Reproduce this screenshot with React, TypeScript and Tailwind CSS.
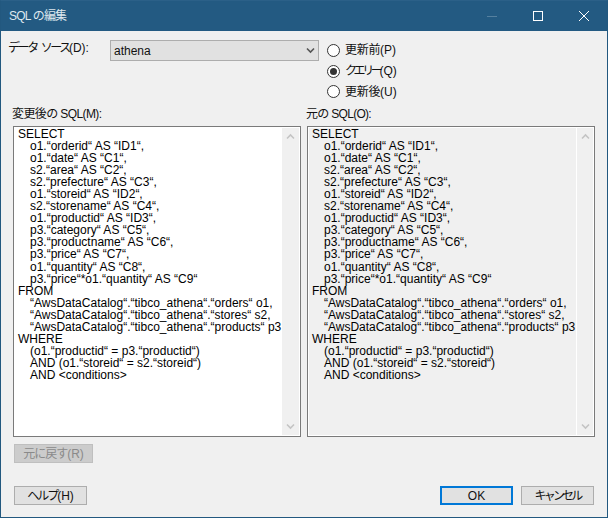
import React from "react";

const FONT = "font-['Liberation_Sans','Noto_Sans_CJK_JP',sans-serif]";

const SQL_LINES: [string, boolean][] = [
  ["SELECT", false],
  ["o1.“orderid“ AS “ID1“,", true],
  ["o1.“date“ AS “C1“,", true],
  ["s2.“area“ AS “C2“,", true],
  ["s2.“prefecture“ AS “C3“,", true],
  ["o1.“storeid“ AS “ID2“,", true],
  ["s2.“storename“ AS “C4“,", true],
  ["o1.“productid“ AS “ID3“,", true],
  ["p3.“category“ AS “C5“,", true],
  ["p3.“productname“ AS “C6“,", true],
  ["p3.“price“ AS “C7“,", true],
  ["o1.“quantity“ AS “C8“,", true],
  ["p3.“price“*o1.“quantity“ AS “C9“", true],
  ["FROM", false],
  ["“AwsDataCatalog“.“tibco_athena“.“orders“ o1,", true],
  ["“AwsDataCatalog“.“tibco_athena“.“stores“ s2,", true],
  ["“AwsDataCatalog“.“tibco_athena“.“products“ p3", true],
  ["WHERE", false],
  ["(o1.“productid“ = p3.“productid“)", true],
  ["AND (o1.“storeid“ = s2.“storeid“)", true],
  ["AND <conditions>", true],
];

function Chevron({ up, color = "#c4c4c4" }: { up?: boolean; color?: string }) {
  return (
    <svg width="9" height="7" viewBox="0 0 9 7" className="block">
      <path d={up ? "M1 5.5 L4.5 2 L8 5.5" : "M1 1.5 L4.5 5 L8 1.5"} fill="none" stroke={color} strokeWidth="1.6" />
    </svg>
  );
}

function SqlPanel({ label, grey, labelCls }: { label: string; grey?: boolean; labelCls: string }) {
  return (
    <div className="flex flex-col w-[288px]">
      <div className={`h-[19px] -ml-[1px] text-[12px] leading-[15px] text-[#111] ${labelCls}`}>{label}</div>
      <div className="h-[311px] border border-[#7a7a7a]">
        <div className={`h-full flex border border-white ${grey ? "bg-[#f0f0f0]" : "bg-white"}`}>
          <div className="flex-1 pl-[3px] text-[12px] leading-[12.05px] text-black whitespace-pre overflow-hidden">
            {SQL_LINES.map(([text, indent], i) => (
              <div key={i} className={indent ? "pl-[12px]" : ""}>{text}</div>
            ))}
          </div>
          <div className={`w-[17px] flex flex-col justify-between items-center py-[5px] bg-[#f0f0f0] ${grey ? "border-l border-white" : ""}`}>
            <Chevron up />
            <Chevron />
          </div>
        </div>
      </div>
    </div>
  );
}

function Radio({ children, checked }: { children: React.ReactNode; checked?: boolean }) {
  return (
    <div className="h-[21px] flex items-center gap-[5px]">
      <span className="w-[13px] h-[13px] rounded-full border border-[#333] bg-white flex items-center justify-center">
        {checked && <span className="w-[7px] h-[7px] rounded-full bg-[#333]" />}
      </span>
      <span className="text-[12px] text-[#111] whitespace-nowrap">{children}</span>
    </div>
  );
}

function Button({ children, primary, cls }: { children: React.ReactNode; primary?: boolean; cls?: string }) {
  return (
    <div className={`w-[73px] h-[19px] flex items-center justify-center bg-[#e1e1e1] text-[12px] text-[#111] whitespace-nowrap ${primary ? "border-2 border-[#0078d7]" : "border border-[#adadad]"} ${cls ?? ""}`}>
      {children}
    </div>
  );
}

export default function App() {
  return (
    <div className={`${FONT} w-[608px] h-[518px] flex flex-col bg-[#f0f0f0] border border-[#22587f] border-t-[#2b6088] overflow-hidden`}>
      <div className="h-[30px] shrink-0 flex items-center bg-[#235a82] text-white">
        <span className="ml-[8px] text-[12px] tracking-[-0.8px] text-[#dfe8ee]">SQL の編集</span>
        <div className="ml-auto flex items-center">
          <div className="w-[46px] flex justify-center">
            <svg width="10" height="10" viewBox="0 0 10 10"><path d="M0 5.5 H10" stroke="#55809f" strokeWidth="1" /></svg>
          </div>
          <div className="w-[46px] flex justify-center">
            <svg width="10" height="10" viewBox="0 0 10 10"><rect x="0.5" y="0.5" width="9" height="9" fill="none" stroke="#fff" strokeWidth="1" /></svg>
          </div>
          <div className="w-[46px] flex justify-center">
            <svg width="10" height="10" viewBox="0 0 10 10"><path d="M0 0 L10 10 M10 0 L0 10" stroke="#fff" strokeWidth="1" /></svg>
          </div>
        </div>
      </div>

      <div className="flex-1 flex flex-col px-[12px]">
        <div className="flex h-[71px] pt-[9px]">
          <div className="w-[102px] -ml-[5px] pt-[1px] text-[12px] leading-[15px] text-[#111] whitespace-nowrap">
            <span className="tracking-[-2.4px] [word-spacing:3px]">データ ソース</span>(D):
          </div>
          <div className="w-[209px] h-[21px] flex items-center justify-between border border-[#adadad] bg-[#e1e1e1] pl-[3px] pr-[3px] text-[12px] text-[#111]">
            athena
            <Chevron color="#555" />
          </div>
          <div className="ml-[8px] flex flex-col">
            <Radio><span className="tracking-[-0.3px]">更新前</span>(P)</Radio>
            <Radio checked><span className="tracking-[-3.4px]">クエリー</span>(Q)</Radio>
            <Radio><span className="tracking-[-0.3px]">更新後</span>(U)</Radio>
          </div>
        </div>
        <div className="flex justify-between w-[582px] pt-[5px]">
          <SqlPanel label="変更後の SQL(M):" labelCls="tracking-[-0.6px]" />
          <SqlPanel label="元の SQL(O):" grey labelCls="tracking-[-0.7px]" />
        </div>
        <div className="mt-[7px] ml-[1px] w-[79px] h-[19px] flex items-center justify-center bg-[#cccccc] border border-[#bfbfbf] text-[12px] text-[#8a8a8a] whitespace-nowrap">
          <span className="tracking-[-1px]">元に戻す</span>(R)
        </div>
        <div className="mt-[23px] ml-[1px] flex gap-[8px] w-[580px]">
          <Button><span className="tracking-[-2px]">ヘルプ</span>(H)</Button>
          <Button primary cls="ml-auto">OK</Button>
          <Button cls="tracking-[-2.8px]">キャンセル</Button>
        </div>
      </div>
    </div>
  );
}
